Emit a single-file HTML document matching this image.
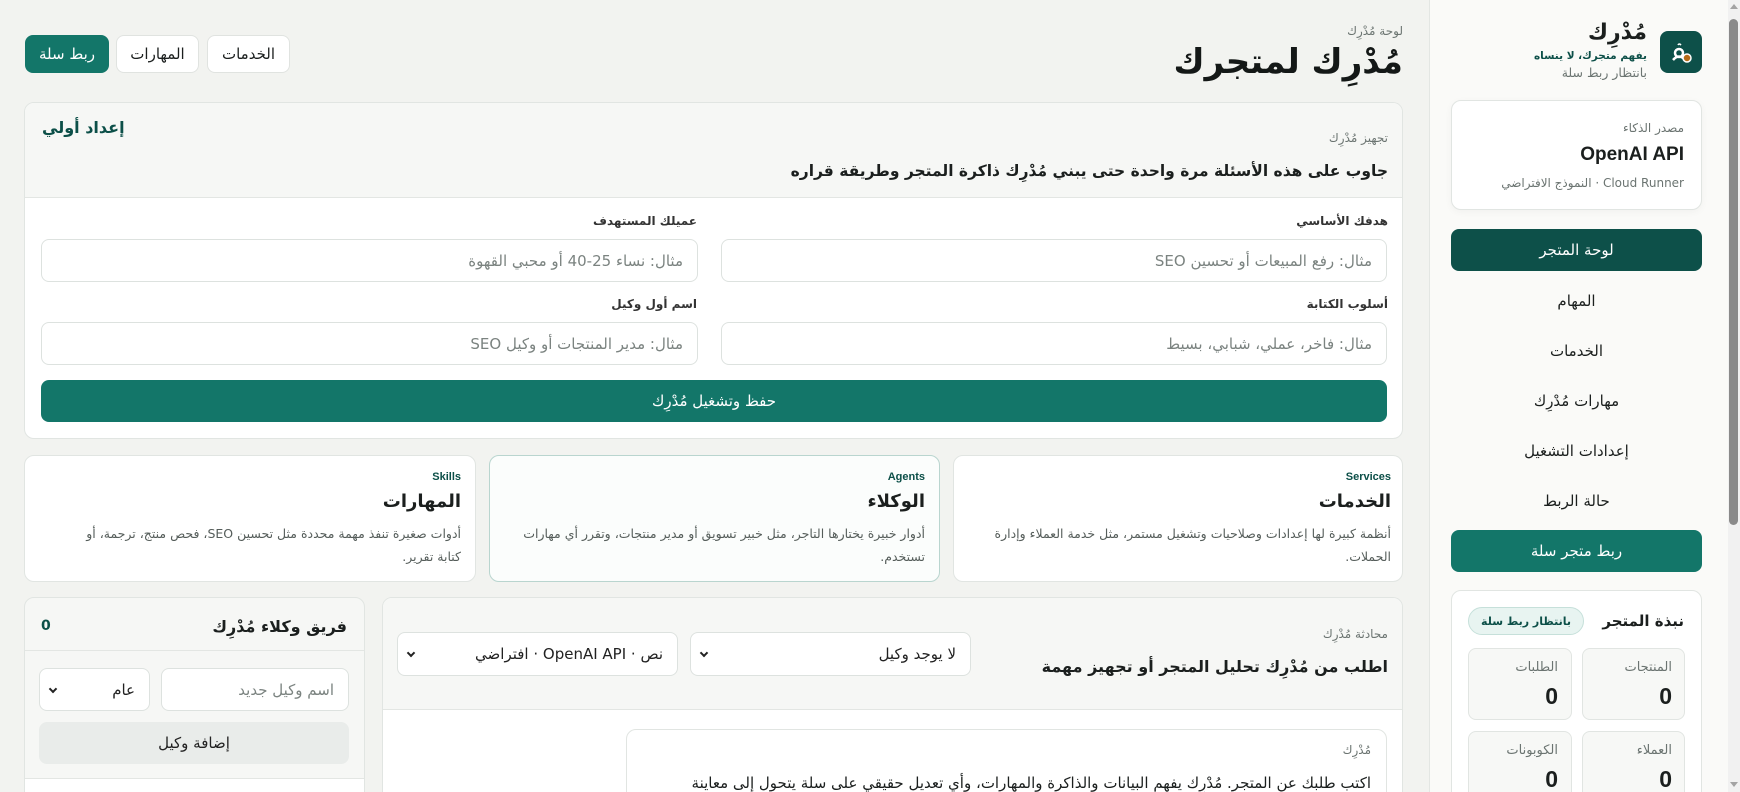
<!DOCTYPE html>
<html lang="ar" dir="rtl"><head><meta charset="utf-8">
<style>
*{box-sizing:border-box;margin:0;padding:0}
html,body{width:1740px;height:792px;overflow:hidden}
body{background:#f2f3f0;font-family:"DejaVu Sans","Liberation Sans",sans-serif;color:#1b1f1e;position:relative}
.a{position:absolute}
.t{position:absolute;white-space:nowrap}
.r{text-align:right}
.card{position:absolute;background:#fff;border:1px solid #e1e5e2;border-radius:10px}
.inp{position:absolute;background:#fff;border:1px solid #dde2df;border-radius:8px;color:#7b8380;font-size:15px;padding:0 14px;display:flex;align-items:center}
.btn{position:absolute;border-radius:8px;display:flex;align-items:center;justify-content:center;font-size:15px}
.caret{position:absolute;left:10px;top:50%;margin-top:-4px;width:6px;height:6px;border-right:2px solid #222;border-bottom:2px solid #222;transform:rotate(45deg)}
.n{font-size:23px;font-weight:bold;font-family:'Liberation Sans',sans-serif}
</style></head><body>

<div class="btn" style="left:25px;top:35px;width:84px;height:38px;background:#137669;color:#fff">ربط سلة</div>
<div class="btn" style="left:116px;top:35px;width:83px;height:38px;background:#fff;border:1px solid #e0e3e0">المهارات</div>
<div class="btn" style="left:207px;top:35px;width:83px;height:38px;background:#fff;border:1px solid #e0e3e0">الخدمات</div>
<div class="t" style="right:337px;top:24px;font-size:12px;color:#6b7471">لوحة مُدْرِك</div>
<div class="t" style="right:337px;top:42px;font-size:34px;font-weight:bold;color:#141817">مُدْرِك لمتجرك</div>

<div class="card" style="left:24px;top:102px;width:1379px;height:337px;overflow:hidden">
  <div class="a" style="left:0;top:0;width:100%;height:95px;background:#f6f7f5;border-bottom:1px solid #e3e6e3"></div>
</div>
<div class="t" style="left:42px;top:118px;font-size:16px;font-weight:bold;color:#0c4f48">إعداد أولي</div>
<div class="t" style="right:352px;top:131px;font-size:12px;color:#6b7471">تجهيز مُدْرِك</div>
<div class="t" style="right:352px;top:162px;font-size:15.5px;font-weight:bold">جاوب على هذه الأسئلة مرة واحدة حتى يبني مُدْرِك ذاكرة المتجر وطريقة قراره</div>
<div class="t" style="right:352px;top:214px;font-size:12px;font-weight:bold;color:#333">هدفك الأساسي</div>
<div class="t" style="right:1043px;top:214px;font-size:12px;font-weight:bold;color:#333">عميلك المستهدف</div>
<div class="inp" style="left:721px;top:239px;width:666px;height:43px">مثال: رفع المبيعات أو تحسين SEO</div>
<div class="inp" style="left:41px;top:239px;width:657px;height:43px">مثال: نساء 25-40 أو محبي القهوة</div>
<div class="t" style="right:352px;top:297px;font-size:12px;font-weight:bold;color:#333">أسلوب الكتابة</div>
<div class="t" style="right:1043px;top:297px;font-size:12px;font-weight:bold;color:#333">اسم أول وكيل</div>
<div class="inp" style="left:721px;top:322px;width:666px;height:43px">مثال: فاخر، عملي، شبابي، بسيط</div>
<div class="inp" style="left:41px;top:322px;width:657px;height:43px">مثال: مدير المنتجات أو وكيل SEO</div>
<div class="btn" style="left:41px;top:380px;width:1346px;height:42px;background:#137669;color:#fff">حفظ وتشغيل مُدْرِك</div>

<div class="card" style="left:953px;top:455px;width:450px;height:127px"></div>
<div class="card" style="left:489px;top:455px;width:451px;height:127px;border-color:#b9d5cf;background:#fbfdfc"></div>
<div class="card" style="left:24px;top:455px;width:452px;height:127px"></div>
<div class="t" style="right:349px;top:471px;font-size:11px;font-weight:bold;color:#0c4f48;font-family:'Liberation Sans',sans-serif">Services</div>
<div class="t" style="right:349px;top:491px;font-size:18px;font-weight:bold">الخدمات</div>
<div class="a r" style="right:349px;top:522px;width:420px;font-size:12.5px;line-height:23px;color:#555d5a">أنظمة كبيرة لها إعدادات وصلاحيات وتشغيل مستمر، مثل خدمة العملاء وإدارة الحملات.</div>
<div class="t" style="right:815px;top:471px;font-size:11px;font-weight:bold;color:#0c4f48;font-family:'Liberation Sans',sans-serif">Agents</div>
<div class="t" style="right:815px;top:491px;font-size:18px;font-weight:bold">الوكلاء</div>
<div class="a r" style="right:815px;top:522px;width:420px;font-size:12.5px;line-height:23px;color:#555d5a">أدوار خبيرة يختارها التاجر، مثل خبير تسويق أو مدير منتجات، وتقرر أي مهارات تستخدم.</div>
<div class="t" style="right:1279px;top:471px;font-size:11px;font-weight:bold;color:#0c4f48;font-family:'Liberation Sans',sans-serif">Skills</div>
<div class="t" style="right:1279px;top:491px;font-size:18px;font-weight:bold">المهارات</div>
<div class="a r" style="right:1279px;top:522px;width:400px;font-size:12.5px;line-height:23px;color:#555d5a">أدوات صغيرة تنفذ مهمة محددة مثل تحسين SEO، فحص منتج، ترجمة، أو كتابة تقرير.</div>

<div class="card" style="left:382px;top:597px;width:1021px;height:210px;background:#fff;overflow:hidden">
  <div class="a" style="left:0;top:0;width:100%;height:112px;background:#f6f7f5;border-bottom:1px solid #e3e6e3"></div>
</div>
<div class="t" style="right:352px;top:627px;font-size:12px;color:#6b7471">محادثة مُدْرِك</div>
<div class="t" style="right:352px;top:657px;font-size:16px;font-weight:bold">اطلب من مُدْرِك تحليل المتجر أو تجهيز مهمة</div>
<div class="inp" style="left:690px;top:632px;width:281px;height:44px;color:#222">لا يوجد وكيل<span class="caret"></span></div>
<div class="inp" style="left:397px;top:632px;width:281px;height:44px;color:#222">نص · OpenAI API · افتراضي<span class="caret"></span></div>
<div class="card" style="left:626px;top:729px;width:761px;height:100px;border-radius:10px"></div>
<div class="t" style="right:369px;top:743px;font-size:12px;color:#6b7471">مُدْرِك</div>
<div class="t" style="right:369px;top:774px;font-size:15px">اكتب طلبك عن المتجر. مُدْرِك يفهم البيانات والذاكرة والمهارات، وأي تعديل حقيقي على سلة يتحول إلى معاينة</div>

<div class="card" style="left:24px;top:597px;width:341px;height:210px;background:#f6f7f5;overflow:hidden">
  <div class="a" style="left:0;top:52px;width:100%;height:1px;background:#e3e6e3"></div>
  <div class="a" style="left:0;top:180px;width:100%;height:40px;background:#fff;border-top:1px solid #e3e6e3"></div>
</div>
<div class="t" style="right:1393px;top:617px;font-size:16px;font-weight:bold">فريق وكلاء مُدْرِك</div>
<div class="t" style="left:41px;top:618px;font-size:14px;font-weight:bold;color:#0c4f48">0</div>
<div class="inp" style="left:161px;top:668px;width:188px;height:43px">اسم وكيل جديد</div>
<div class="inp" style="left:39px;top:668px;width:111px;height:43px;color:#222">عام<span class="caret"></span></div>
<div class="btn" style="left:39px;top:722px;width:310px;height:42px;background:#e9ecea;color:#222">إضافة وكيل</div>

<div class="a" style="left:1429px;top:0;width:299px;height:792px;background:#fafaf8;border-left:1px solid #e3e6e3"></div>
<div class="a" style="left:1660px;top:31px;width:42px;height:42px;background:#0d5049;border-radius:8px">
  <svg width="42" height="42" viewBox="0 0 42 42"><circle cx="19" cy="22" r="4" fill="none" stroke="#fff" stroke-width="2.5"/><path d="M13 29 Q19 22 25 29" fill="none" stroke="#fff" stroke-width="2.5"/><path d="M18 14 q1 -2 3 0" fill="none" stroke="#fff" stroke-width="1.6"/><circle cx="27" cy="27" r="4" fill="#b66a16" stroke="#fff" stroke-width="1.5"/></svg>
</div>
<div class="t" style="right:93px;top:20px;font-size:22px;font-weight:bold">مُدْرِك</div>
<div class="t" style="right:93px;top:50px;font-size:10.5px;font-weight:bold;color:#0c4f48">يفهم متجرك، لا ينساه</div>
<div class="t" style="right:93px;top:65px;font-size:12.5px;color:#6b7471">بانتظار ربط سلة</div>
<div class="card" style="left:1451px;top:100px;width:251px;height:110px;box-shadow:0 2px 8px rgba(0,0,0,.04)"></div>
<div class="t" style="right:56px;top:121px;font-size:12px;color:#6b7471">مصدر الذكاء</div>
<div class="t" style="right:56px;top:144px;font-size:19px;font-weight:bold;font-family:'Liberation Sans',sans-serif">OpenAI API</div>
<div class="t" style="right:56px;top:176px;font-size:12px;color:#6b7471">Cloud Runner · النموذج الافتراضي</div>
<div class="btn" style="left:1451px;top:229px;width:251px;height:42px;background:#0d5049;color:#fff">لوحة المتجر</div>
<div class="btn" style="left:1451px;top:281px;width:251px;height:40px">المهام</div>
<div class="btn" style="left:1451px;top:331px;width:251px;height:40px">الخدمات</div>
<div class="btn" style="left:1451px;top:381px;width:251px;height:40px">مهارات مُدْرِك</div>
<div class="btn" style="left:1451px;top:431px;width:251px;height:40px">إعدادات التشغيل</div>
<div class="btn" style="left:1451px;top:481px;width:251px;height:40px">حالة الربط</div>
<div class="btn" style="left:1451px;top:530px;width:251px;height:42px;background:#137669;color:#fff">ربط متجر سلة</div>
<div class="card" style="left:1451px;top:590px;width:251px;height:220px"></div>
<div class="t" style="right:56px;top:612px;font-size:15px;font-weight:bold">نبذة المتجر</div>
<div class="btn" style="left:1468px;top:607px;width:116px;height:28px;border-radius:14px;background:#e8f4f1;border:1px solid #c6e0da;font-size:11px;font-weight:bold;color:#0c4f48">بانتظار ربط سلة</div>
<div class="card" style="left:1582px;top:648px;width:103px;height:72px;background:#f7f8f6;border-radius:8px"></div>
<div class="card" style="left:1468px;top:648px;width:104px;height:72px;background:#f7f8f6;border-radius:8px"></div>
<div class="card" style="left:1582px;top:731px;width:103px;height:72px;background:#f7f8f6;border-radius:8px"></div>
<div class="card" style="left:1468px;top:731px;width:104px;height:72px;background:#f7f8f6;border-radius:8px"></div>
<div class="t" style="right:68px;top:660px;font-size:13px;color:#6b7471">المنتجات</div>
<div class="t n" style="right:68px;top:683px">0</div>
<div class="t" style="right:182px;top:660px;font-size:13px;color:#6b7471">الطلبات</div>
<div class="t n" style="right:182px;top:683px">0</div>
<div class="t" style="right:68px;top:743px;font-size:13px;color:#6b7471">العملاء</div>
<div class="t n" style="right:68px;top:766px">0</div>
<div class="t" style="right:182px;top:743px;font-size:13px;color:#6b7471">الكوبونات</div>
<div class="t n" style="right:182px;top:766px">0</div>

<div class="a" style="left:1728px;top:0;width:12px;height:792px;background:#f1f1f1"></div>
<div class="a" style="left:1729px;top:19px;width:9px;height:506px;background:#8a8a8a;border-radius:5px"></div>
<div class="a" style="left:1730px;top:4px;width:0;height:0;border-left:4px solid transparent;border-right:4px solid transparent;border-bottom:5px solid #a3a3a3"></div>
<div class="a" style="left:1730px;top:782px;width:0;height:0;border-left:4px solid transparent;border-right:4px solid transparent;border-top:5px solid #a3a3a3"></div>
</body></html>
